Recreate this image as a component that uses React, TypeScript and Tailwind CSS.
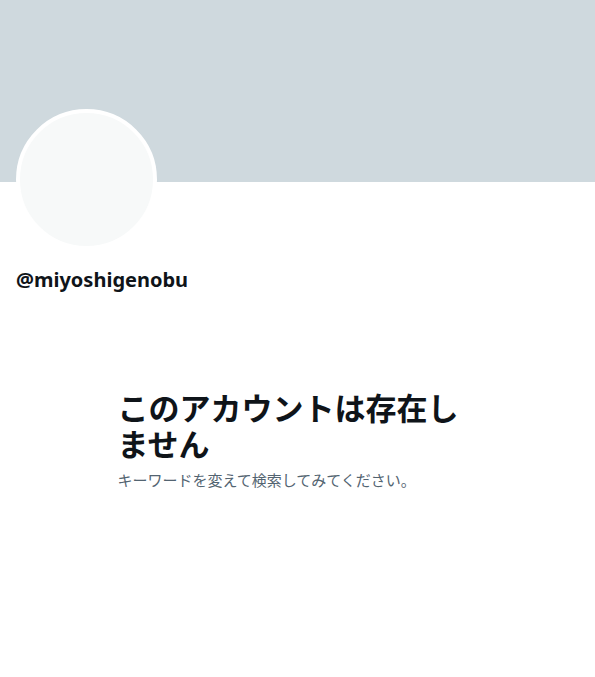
import React from 'react';

const App: React.FC = () => {
  return (
    <div className="min-h-[677px] w-full bg-white" style={{ fontFamily: '"Noto Sans", "Noto Sans CJK JP", sans-serif' }}>
      {/* banner */}
      <div className="h-[182px] w-full bg-[#cfd9de]" />

      <div className="px-4">
        <div className="-mt-[73px] h-[141px] w-[141px] rounded-full border-4 border-white bg-[#f7f9f9]" />
        <div className="mt-[18px] text-[20px] font-bold leading-6 text-[#0f1419]">@miyoshigenobu</div>
      </div>

      <div className="mx-auto mt-[98px] w-[360px]">
        <h2 className="text-[31px] font-bold leading-9 text-[#0f1419]">このアカウントは存在しません</h2>
        <p className="mt-2 text-[15px] leading-5 text-[#536471]">キーワードを変えて検索してみてください。</p>
      </div>
    </div>
  );
};

export default App;
